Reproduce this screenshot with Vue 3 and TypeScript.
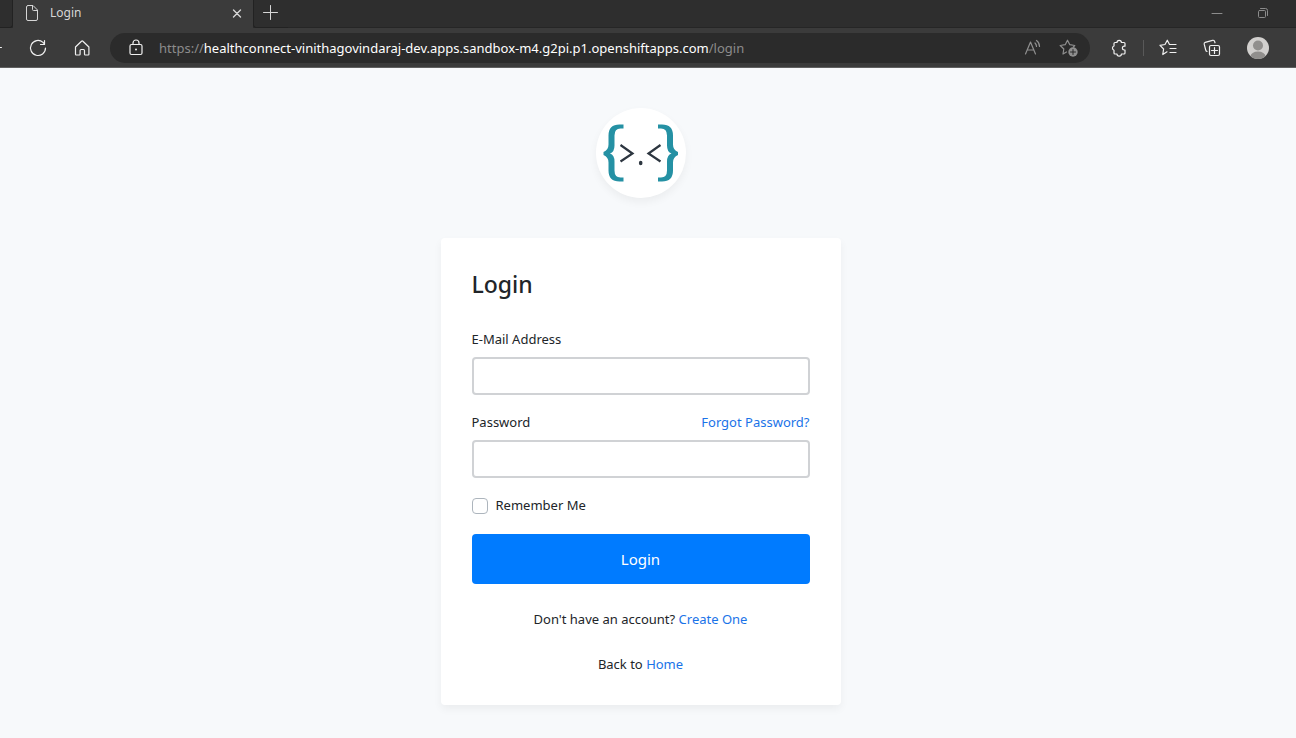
<script setup lang="ts">
import { ref } from 'vue'

const email = ref('')
const password = ref('')
const remember = ref(false)
</script>

<template>
  <div class="window">
    <header class="browser">
      <div class="tabs">
        <div class="edge"></div>
        <div class="tab">
          <svg class="icon" viewBox="0 0 20 20" aria-hidden="true">
            <path d="M6 2.500h5l4.500 4.500v9a1.500 1.500 0 0 1-1.500 1.500h-8a1.500 1.500 0 0 1-1.500-1.500v-12a1.500 1.500 0 0 1 1.500-1.500M10.500 2.500v4a1 1 0 0 0 1 1h4" />
          </svg>
          <span class="tab-title">Login</span>
          <button class="close" type="button" aria-label="Close tab">
            <svg class="icon" viewBox="0 0 20 20"><path d="M6.500 7l7 7M13.500 7l-7 7" stroke-width="1.400" /></svg>
          </button>
        </div>
        <button class="new" type="button" aria-label="New tab">
          <svg class="icon" viewBox="0 0 20 20"><path d="M9.500 3.500v14M2.500 10.500h14" /></svg>
        </button>
        <div class="spacer"></div>
        <button class="win" type="button" aria-label="Minimize">
          <svg class="icon" viewBox="0 0 20 20"><path d="M5 10.500h10" /></svg>
        </button>
        <button class="win" type="button" aria-label="Restore">
          <svg class="icon" viewBox="0 0 20 20">
            <rect x="5.500" y="7.500" width="7" height="7" rx="1" />
            <path d="M7.500 5.500h5a2 2 0 0 1 2 2v5" />
          </svg>
        </button>
      </div>

      <div class="toolbar">
        <button class="back" type="button" aria-label="Back">
          <svg viewBox="0 0 16 20" width="16" height="20"><path d="M0 9.500h1.500" /></svg>
        </button>
        <button class="tool" type="button" aria-label="Refresh">
          <svg class="icon" viewBox="0 0 20 20"><path d="M17.500 10a7.500 7.500 0 1 1-2.500-5.600l1.500 1.600M16.500 2.500v4h-4" stroke-width="1.200" /></svg>
        </button>
        <button class="tool" type="button" aria-label="Home">
          <svg class="icon" viewBox="0 0 20 20"><path d="M3.500 9l6-5.800q.7-.6 1.400 0l6 5.800v7.200q0 .8-.8.8h-2.800q-.8 0-.8-.8v-3.700q0-1-1-1h-2.400q-1 0-1 1v3.700q0 .8-.8.8h-3q-.8 0-.8-.8z" stroke-width="1.200" /></svg>
        </button>

        <div class="address">
          <svg class="icon" viewBox="0 0 20 20" aria-hidden="true">
            <rect x="4" y="6.500" width="12" height="10" rx="1.500" stroke-width="1.200" />
            <path d="M7 6.500v-1.500a3 3 0 0 1 6 0v1.500" stroke-width="1.200" />
            <circle class="solid" cx="10" cy="11.500" r="1" />
          </svg>
          <div class="url">https://<span class="host">healthconnect-vinithagovindaraj-dev.apps.sandbox-m4.g2pi.p1.openshiftapps.com</span>/login</div>
          <button class="inner" type="button" aria-label="Read aloud">
            <svg class="icon" viewBox="0 0 20 20"><path d="M2.500 16l5-12 5 12M4.300 12h6.400M12 5q1.500 1.500 1.500 3.500M13.500 2.500q3 2 3 6" stroke-width="1.200" /></svg>
          </button>
          <button class="inner" type="button" aria-label="Add to favorites">
            <svg class="icon" viewBox="0 0 20 20">
              <path d="M7.500 14l-3.500 2 .8-5-3.600-3.500 5-.8 2.300-4.500 2.300 4.500 5 .8-1.500 1.500" stroke-width="1.200" />
              <circle class="solid" cx="14" cy="14" r="4.700" />
              <path class="cut" d="M14 11.500v5M11.500 14h5" />
            </svg>
          </button>
        </div>

        <button class="tool" type="button" aria-label="Extensions">
          <svg class="icon" viewBox="0 0 20 20"><path d="M6 4.500h2a2.200 2.200 0 0 1 4.400 0h2.600q1 0 1 1v2.700h-.7a1.900 1.900 0 0 0 0 3.800h.7v3q0 1-1 1h-2.600a2.200 2.200 0 0 1-4.400 0h-2q-1 0-1-1v-2.800a2.200 2.200 0 0 1 0-4.200v-2.500q0-1 1-1z" stroke-width="1.200" /></svg>
        </button>
        <span class="divider"></span>
        <button class="tool" type="button" aria-label="Favorites">
          <svg class="icon" viewBox="0 0 20 20"><path d="M9 13.800l-4.200 2.700.8-5.500-3.600-3.700 5-.8 2.300-4.300 2.200 4.300h6.500M12 10.500h6M12 14.500h6" stroke-width="1.200" /></svg>
        </button>
        <button class="tool" type="button" aria-label="Collections">
          <svg class="icon" viewBox="0 0 20 20">
            <rect x="7.500" y="7.500" width="10" height="10" rx="1.500" stroke-width="1.200" />
            <path d="M12.500 9.500v6M9.500 12.500h6M5 13.500q-1-.4-1.300-1.500l-1.500-5.800q-.3-1.400 1-1.900l7.300-2q1.500-.3 2 1l.5 1.500" stroke-width="1.200" />
          </svg>
        </button>
        <button class="profile" type="button" aria-label="Profile">
          <svg viewBox="0 0 22 22" width="22" height="22">
            <defs><clipPath id="avatar"><circle cx="11" cy="11" r="11" /></clipPath></defs>
            <g clip-path="url(#avatar)">
              <rect class="light" width="22" height="22" />
              <circle class="person" cx="11" cy="8.500" r="5" />
              <ellipse class="person" cx="11" cy="19.500" rx="7.500" ry="5" />
            </g>
          </svg>
        </button>
      </div>
    </header>

    <main class="page">
      <div class="brand">
        <svg viewBox="0 0 90 90" width="90" height="90" role="img" aria-label="Site logo">
          <path class="brace" d="M27.500 16.500h-4q-11 0-11 11v9q0 5.500-5 7.500v3q5 2 5 7.500v8q0 11 11 11h4v-4h-3q-6 0-6-7v-9q0-6.500-4.500-8 4.500-1.500 4.500-8v-10q0-7 6-7h3z" />
          <path class="brace" d="M62 16.500h4q11 0 11 11v9q0 5.500 5 7.500v3q-5 2-5 7.500v8q0 11-11 11h-4v-4h3q6 0 6-7v-9q0-6.500 4.500-8-4.500-1.500-4.500-8v-10q0-7-6-7h-3z" />
          <path class="eyes" d="M24.500 37l12 8.500-12 8M64.500 37l-12 8.500 12 8" />
          <ellipse class="dot" cx="44.700" cy="55" rx="1.800" ry="2.200" />
        </svg>
      </div>

      <section class="card">
        <h4>Login</h4>
        <form @submit.prevent>
          <div class="field">
            <label for="email">E-Mail Address</label>
            <input id="email" v-model="email" class="text" type="email" />
          </div>
          <div class="field">
            <div class="row">
              <label for="password">Password</label>
              <a href="#forgot">Forgot Password?</a>
            </div>
            <input id="password" v-model="password" class="text" type="password" />
          </div>
          <div class="remember">
            <input id="remember" v-model="remember" type="checkbox" />
            <label for="remember">Remember Me</label>
          </div>
          <button class="submit" type="submit">Login</button>
          <p>Don't have an account? <a href="#register">Create One</a></p>
          <p>Back to <a href="#home">Home</a></p>
        </form>
      </section>
    </main>
  </div>
</template>

<style>
body {
  margin: 0;
  background: #f7f9fb;
}
</style>

<style scoped>
* {
  box-sizing: border-box;
}

.window {
  display: flex;
  flex-direction: column;
  min-height: 100vh;
  background: #f7f9fb;
  color: #212529;
  font-family: "Noto Sans", "Open Sans", sans-serif;
  font-size: 13px;
  line-height: 22px;
}

button {
  margin: 0;
  padding: 0;
  border: 0;
  background: none;
  color: inherit;
  font-family: inherit;
}

svg {
  display: block;
  flex: none;
  fill: none;
  stroke: currentColor;
  stroke-linecap: round;
  stroke-linejoin: round;
}

.icon {
  width: 20px;
  height: 20px;
}

.solid {
  fill: currentColor;
  stroke: none;
}

.browser {
  background: #3b3b3b;
  border-bottom: 1px solid #606060;
  color: #f0f0f0;
}

.tabs {
  display: flex;
  height: 28px;
  background: #2e2e2e;
}

.edge {
  width: 13px;
  border-right: 1px solid #222222;
  border-bottom: 1px solid #222222;
  border-bottom-right-radius: 3px;
}

.tab {
  display: flex;
  align-items: center;
  gap: 8px;
  width: 240px;
  padding: 0 6px 2px 9px;
  background: #3b3b3b;
  color: #d6d6d6;
}

.tab-title {
  flex: 1;
  font-size: 12px;
}

.new {
  display: flex;
  flex: none;
  align-items: center;
  padding: 0 7px 3px;
  border-left: 1px solid #222222;
  border-bottom: 1px solid #222222;
  border-bottom-left-radius: 3px;
  color: #d6d6d6;
}

.spacer {
  flex: 1;
  border-bottom: 1px solid #262626;
}

.win {
  display: flex;
  align-items: center;
  justify-content: center;
  width: 46px;
  padding-bottom: 1px;
  border-bottom: 1px solid #262626;
  color: #8c8c8c;
}

.win:last-child {
  width: 56px;
  padding-right: 10px;
}

.toolbar {
  display: flex;
  align-items: center;
  height: 39px;
  padding: 0 16px 0 0;
}

.back {
  width: 16px;
}

.tool,
.profile {
  display: flex;
  flex: none;
  align-items: center;
  justify-content: center;
  width: 44px;
  height: 30px;
}

.profile {
  margin-left: 2px;
}

.address {
  display: flex;
  flex: 1;
  align-items: center;
  min-width: 0;
  height: 30px;
  margin: 0 7px 0 6px;
  padding: 0 3px 0 16px;
  border-radius: 15px;
  background: #2b2b2b;
}

.url {
  flex: 1;
  overflow: hidden;
  margin-left: 13px;
  color: #8c8c8c;
  white-space: nowrap;
}

.host {
  color: #ffffff;
}

.inner {
  display: flex;
  justify-content: center;
  width: 36px;
  color: #8f8f8f;
}

.cut {
  stroke: #2b2b2b;
}

.divider {
  width: 1px;
  height: 16px;
  margin: 0 2px;
  background: #595959;
}

.light {
  fill: #d2d0ce;
  stroke: none;
}

.person {
  fill: #918f8d;
  stroke: none;
}

.page {
  display: flex;
  flex: 1;
  flex-direction: column;
  align-items: center;
  gap: 40px;
  padding: 40px 15px 33px 0;
}

.brand {
  overflow: hidden;
  border-radius: 50%;
  background: #ffffff;
  box-shadow: 0 4px 8px rgba(0, 0, 0, 0.05);
}

.brace {
  fill: #2591a4;
  stroke: none;
}

.eyes {
  stroke: #2d3640;
  stroke-width: 2.2;
  stroke-linecap: butt;
  stroke-linejoin: miter;
}

.dot {
  fill: #2d3640;
  stroke: none;
}

.card {
  width: 100%;
  max-width: 400px;
  padding: 31px 31px 30px;
  border-radius: 4px;
  background: #ffffff;
  box-shadow: 0 4px 8px rgba(0, 0, 0, 0.05);
}

h4 {
  margin: 0 0 29px;
  font-size: 23px;
  font-weight: 500;
  line-height: 30px;
}

.field {
  display: flex;
  flex-direction: column;
  gap: 7px;
  margin-bottom: 16px;
}

.row {
  display: flex;
  justify-content: space-between;
}

a {
  color: #1a73e8;
  text-decoration: none;
}

.text {
  width: 100%;
  height: 38px;
  padding: 6px 12px;
  border: 2px solid #d0d2d5;
  border-radius: 4px;
  background: #ffffff;
  font: inherit;
}

.remember {
  display: flex;
  align-items: center;
  gap: 8px;
  margin-bottom: 18px;
}

.remember input {
  appearance: none;
  width: 16px;
  height: 16px;
  margin: 2px 0 0;
  border: 1px solid #adb5bd;
  border-radius: 4px;
  background: #ffffff;
}

.remember input:checked {
  background: #007bff;
}

.submit {
  display: block;
  width: 100%;
  height: 50px;
  border-radius: 4px;
  background: #007bff;
  color: #ffffff;
  font-size: 15px;
}

p {
  margin: 24px 0 0;
  text-align: center;
}

p + p {
  margin-top: 23px;
}
</style>
